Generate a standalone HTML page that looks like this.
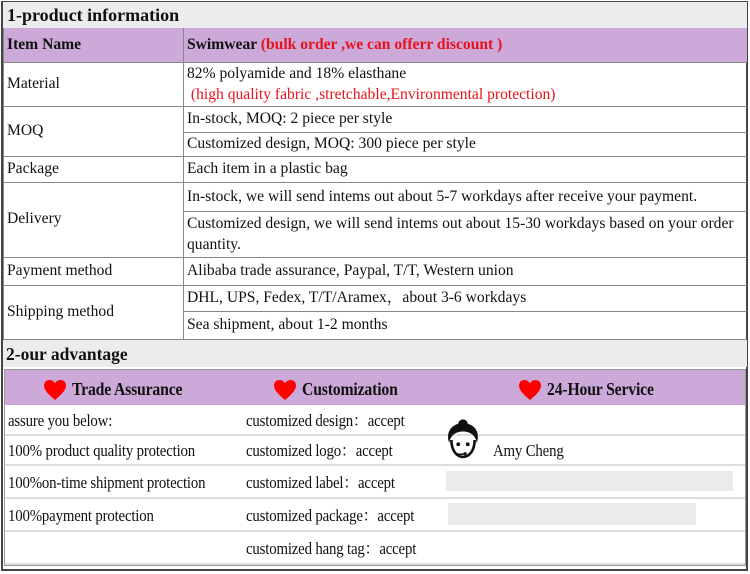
<!DOCTYPE html>
<html><head><meta charset="utf-8"><style>
*{margin:0;padding:0;box-sizing:border-box}
body{width:750px;height:574px;background:#fff;position:relative;overflow:hidden;font-family:"Liberation Serif","Noto Serif CJK SC",serif;color:#111}
.a{position:absolute;line-height:1.15}
.t{font-size:15.6px;white-space:nowrap}
.h{position:absolute;left:0;height:1px;background:#888}
.v{position:absolute;width:1px;background:#888}
.g{position:absolute;height:2px;background:#ddd}
.b{font-weight:bold}
.r{color:#e8121e}
.c{font-size:16.5px;white-space:nowrap;transform:scaleX(.9);transform-origin:left center;letter-spacing:-.2px;line-height:18px;height:18px}
</style></head><body>
<div class="a" style="left:1px;top:1px;width:747px;height:570px;border:2px solid #444;border-top:1px solid #444"></div>
<div class="a" style="left:3px;top:2px;width:744px;height:26px;background:#ececec"></div>
<div class="a b" style="left:7px;top:5px;font-size:18px">1-product information</div>
<div class="a" style="left:3px;top:28px;width:744px;height:34px;background:#cca9d8"></div>
<div class="a t b" style="left:7px;top:36px">Item Name</div>
<div class="a t b" style="left:187px;top:36px">Swimwear <span class="r">(bulk order ,we can offerr discount )</span></div>
<div class="h" style="top:62px;left:3px;width:744px"></div>
<div class="h" style="top:106px;left:3px;width:744px"></div>
<div class="h" style="top:132px;left:183px;width:564px"></div>
<div class="h" style="top:156px;left:3px;width:744px"></div>
<div class="h" style="top:182px;left:3px;width:744px"></div>
<div class="h" style="top:211px;left:183px;width:564px"></div>
<div class="h" style="top:257px;left:3px;width:744px"></div>
<div class="h" style="top:285px;left:3px;width:744px"></div>
<div class="h" style="top:311px;left:183px;width:564px"></div>
<div class="h" style="top:339px;left:3px;width:744px"></div>
<div class="v" style="left:183px;top:28px;height:312px"></div>
<div class="v" style="left:3px;top:28px;height:312px"></div>
<div class="a t" style="left:7px;top:75px">Material</div>
<div class="a t" style="left:187px;top:65px">82% polyamide and 18% elasthane</div>
<div class="a t r" style="left:187px;top:86px">&nbsp;(high quality fabric ,stretchable,Environmental protection)</div>
<div class="a t" style="left:7px;top:122px">MOQ</div>
<div class="a t" style="left:187px;top:110px">In-stock, MOQ: 2 piece per style</div>
<div class="a t" style="left:187px;top:135px">Customized design, MOQ: 300 piece per style</div>
<div class="a t" style="left:7px;top:160px">Package</div>
<div class="a t" style="left:187px;top:160px">Each item in a plastic bag</div>
<div class="a t" style="left:7px;top:210px">Delivery</div>
<div class="a t" style="left:187px;top:188px">In-stock, we will send intems out about 5-7 workdays after receive your payment.</div>
<div class="a t" style="left:187px;top:215px">Customized design, we will send intems out about 15-30 workdays based on your order</div>
<div class="a t" style="left:187px;top:236px">quantity.</div>
<div class="a t" style="left:7px;top:262px">Payment method</div>
<div class="a t" style="left:187px;top:262px">Alibaba trade assurance, Paypal, T/T, Western union</div>
<div class="a t" style="left:7px;top:303px">Shipping method</div>
<div class="a t" style="left:187px;top:289px">DHL, UPS, Fedex, T/T/Aramex，about 3-6 workdays</div>
<div class="a t" style="left:187px;top:316px">Sea shipment, about 1-2 months</div>
<div class="a" style="left:3px;top:340px;width:744px;height:27px;background:#ececec"></div>
<div class="a b" style="left:6px;top:344px;font-size:17.5px">2-our advantage</div>
<div class="a" style="left:4px;top:369px;width:742px;height:197px;border:1px solid #999"></div>
<div class="a" style="left:5px;top:370px;width:740px;height:35px;background:#cca9d8"></div>
<svg class="a" style="left:43px;top:379px" width="24" height="22" viewBox="0 0 24 22"><path d="M12 21C5 15 1 11 1 6.5 1 3 3.5 1 6.5 1 9 1 11 2.5 12 4.5 13 2.5 15 1 17.5 1 20.5 1 23 3 23 6.5 23 11 19 15 12 21Z" fill="#f00"/></svg>
<div class="a b c" style="left:72px;top:380px;font-size:17.5px">Trade Assurance</div>
<svg class="a" style="left:273px;top:379px" width="24" height="22" viewBox="0 0 24 22"><path d="M12 21C5 15 1 11 1 6.5 1 3 3.5 1 6.5 1 9 1 11 2.5 12 4.5 13 2.5 15 1 17.5 1 20.5 1 23 3 23 6.5 23 11 19 15 12 21Z" fill="#f00"/></svg>
<div class="a b c" style="left:302px;top:380px;font-size:17.5px">Customization</div>
<svg class="a" style="left:518px;top:379px" width="24" height="22" viewBox="0 0 24 22"><path d="M12 21C5 15 1 11 1 6.5 1 3 3.5 1 6.5 1 9 1 11 2.5 12 4.5 13 2.5 15 1 17.5 1 20.5 1 23 3 23 6.5 23 11 19 15 12 21Z" fill="#f00"/></svg>
<div class="a b c" style="left:547px;top:380px;font-size:17.5px">24-Hour Service</div>
<div class="g" style="left:5px;top:434px;width:740px"></div>
<div class="g" style="left:5px;top:464px;width:740px"></div>
<div class="g" style="left:5px;top:497px;width:740px"></div>
<div class="g" style="left:5px;top:530px;width:740px"></div>
<div class="g" style="left:5px;top:563px;width:740px"></div>
<div class="a c" style="left:8px;top:412px">assure you below:</div>
<div class="a c" style="left:8px;top:442px">100% product quality protection</div>
<div class="a c" style="left:8px;top:474px">100%on-time shipment protection</div>
<div class="a c" style="left:8px;top:507px">100%payment protection</div>
<div class="a c" style="left:246px;top:412px">customized design：accept</div>
<div class="a c" style="left:246px;top:442px">customized logo：accept</div>
<div class="a c" style="left:246px;top:474px">customized label：accept</div>
<div class="a c" style="left:246px;top:507px">customized package：accept</div>
<div class="a c" style="left:246px;top:540px">customized hang tag：accept</div>
<svg class="a" style="left:444px;top:418px" width="38" height="44" viewBox="0 0 36 40">
<path d="M5 23C1 12 8 4 18 4 28 4 35 12 31 23 30 15 24 12 18 12 12 12 6 15 5 23Z" fill="#111"/>
<circle cx="18" cy="5" r="4.5" fill="#111"/>
<path d="M7 20C7 30 12 36 18 36 24 36 29 30 29 20" fill="none" stroke="#111" stroke-width="2.5"/>
<circle cx="13.5" cy="24" r="1.8" fill="#111"/><circle cx="22.5" cy="24" r="1.8" fill="#111"/>
<path d="M9 30C11 34 15 34 20 33" fill="none" stroke="#111" stroke-width="1.5"/><circle cx="20" cy="33" r="1.5" fill="#111"/>
</svg>
<div class="a c" style="left:493px;top:442px">Amy Cheng</div>
<div class="a" style="left:446px;top:471px;width:287px;height:20px;background:#ebebeb"></div>
<div class="a" style="left:448px;top:503px;width:248px;height:22px;background:#ebebeb"></div>
</body></html>
